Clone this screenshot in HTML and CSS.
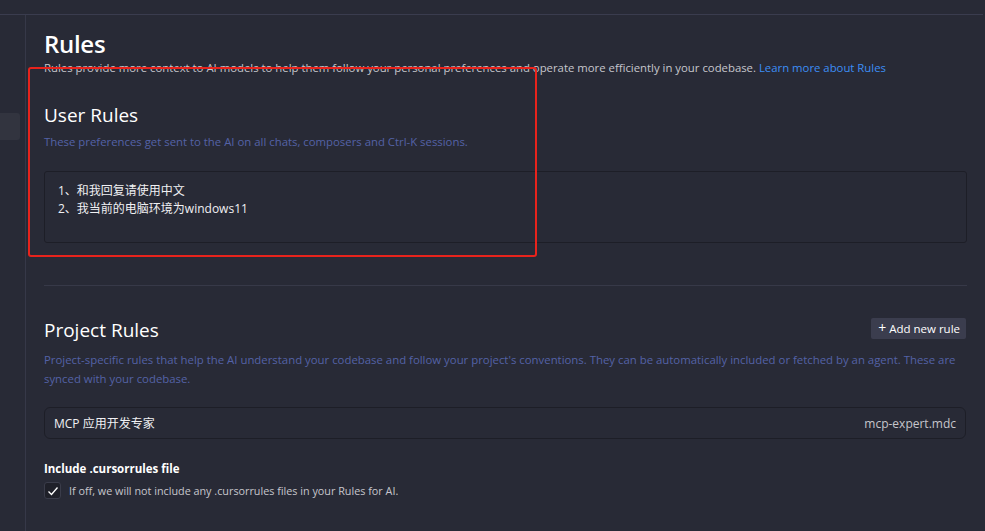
FILE: index.html
```html
<!DOCTYPE html>
<html lang="en">
<head>
    <meta charset="UTF-8">
    <title>Rules</title>
    <link rel="stylesheet" href="styles.css">
</head>
<body>
    <div class="topbar"></div>
    <div class="layout">
        <div class="sidebar">
            <div class="side-item"></div>
        </div>
        <div class="main">
            <h1 class="page-title">Rules</h1>
            <p class="page-desc">Rules provide more context to AI models to help them follow your personal preferences and operate more efficiently in your codebase. <a href="#" class="link">Learn more about Rules</a></p>

            <section class="section">
                <h2 class="section-title">User Rules</h2>
                <p class="section-desc">These preferences get sent to the AI on all chats, composers and Ctrl-K sessions.</p>
                <div class="rules-box">
                    <div>1、和我回复请使用中文</div>
                    <div>2、我当前的电脑环境为windows11</div>
                </div>
            </section>

            <hr class="divider">

            <section class="section">
                <div class="section-head">
                    <h2 class="section-title">Project Rules</h2>
                    <button class="btn-add"><span class="plus">+</span> Add new rule</button>
                </div>
                <p class="section-desc project-desc">Project-specific rules that help the AI understand your codebase and follow your project's conventions. They can be automatically included or fetched by an agent. These are synced with your codebase.</p>
                <div class="rule-row">
                    <span class="rule-name">MCP 应用开发专家</span>
                    <span class="rule-file">mcp-expert.mdc</span>
                </div>

                <div class="option-title">Include .cursorrules file</div>
                <label class="option">
                    <span class="checkbox">
                        <svg width="12" height="12" viewBox="0 0 12 12"><path d="M1.5 6.5 L4.5 9.5 L10.5 2.5" fill="none" stroke="#ffffff" stroke-width="1.3"/></svg>
                    </span>
                    <span class="option-text">If off, we will not include any .cursorrules files in your Rules for AI.</span>
                </label>
            </section>
        </div>
    </div>
    <div class="highlight"></div>
</body>
</html>
```

FILE: styles.css
```css
body {
    margin: 0;
    background: #282a36;
    font-family: "Open Sans", "Noto Sans CJK SC", sans-serif;
    color: #e6e6ea;
    overflow: hidden;
    height: 531px;
}

.topbar {
    height: 14px;
    border-bottom: 1px solid #3a3c4e;
    margin-right: 2px;
}

.layout {
    display: flex;
    height: 516px;
}

.sidebar {
    width: 25px;
    border-right: 1px solid #363848;
    flex-shrink: 0;
}

.side-item {
    margin-top: 98px;
    width: 20px;
    height: 27px;
    background: #32343f;
    border-radius: 0 3px 3px 0;
}

.main {
    flex: 1;
    padding: 14px 18px 0 18px;
}

.page-title {
    margin: 0;
    font-size: 24px;
    font-weight: 600;
    letter-spacing: -0.3px;
    color: #ffffff;
    line-height: 30px;
}

.page-desc {
    margin: 1px 0 0;
    font-size: 11.35px;
    line-height: 16px;
    color: #c6c6cc;
}

.link {
    color: #3d8ef5;
    text-decoration: none;
}

.section-title {
    margin: 0;
    font-size: 19px;
    font-weight: 400;
    color: #ffffff;
    line-height: 26px;
}

.section:first-of-type .section-title {
    margin-top: 26px;
}

.section-desc {
    margin: 4px 0 0;
    font-size: 11.37px;
    line-height: 19px;
    color: #5462a6;
}

.rules-box {
    margin-top: 20px;
    height: 72px;
    border: 1px solid #1d1e27;
    border-radius: 3px;
    padding: 10px 13px 0;
    box-sizing: border-box;
    font-size: 12px;
    line-height: 18px;
    color: #f0f0f3;
}

.divider {
    margin: 42px 0 0;
    border: none;
    border-top: 1px solid #373948;
}

.section-head {
    display: flex;
    justify-content: space-between;
    align-items: center;
    margin-top: 31px;
}

.btn-add {
    height: 21px;
    background: #3b3d4e;
    border: none;
    border-radius: 2px;
    color: #ffffff;
    font-family: inherit;
    font-size: 11.5px;
    padding: 0 6px 0 7px;
    margin: 0 1px 4px 0;
}

.plus {
    font-size: 14px;
    line-height: 14px;
}

.project-desc {
    margin-top: 7px;
    font-size: 11.39px;
}

.rule-row {
    margin-top: 19px;
    height: 32px;
    border: 1px solid #1d1e27;
    border-radius: 6px;
    display: flex;
    justify-content: space-between;
    align-items: center;
    padding: 0 9px;
    box-sizing: border-box;
    font-size: 12px;
    margin-right: 1px;
}

.rule-name {
    color: #f0f0f3;
}

.rule-file {
    color: #c6c6cc;
}

.option-title {
    margin-top: 22px;
    font-size: 11.5px;
    font-weight: 700;
    color: #ffffff;
}

.option {
    display: flex;
    align-items: center;
    gap: 8px;
    margin-top: 6px;
}

.checkbox {
    width: 15px;
    height: 15px;
    border: 1px solid #3a3c4a;
    background: #1f2029;
    border-radius: 3px;
    display: flex;
    align-items: center;
    justify-content: center;
}

.option-text {
    font-size: 10.8px;
    color: #c6c6cc;
}

.highlight {
    position: absolute;
    left: 28px;
    top: 67px;
    width: 505px;
    height: 186px;
    border: 2px solid #e8231c;
    border-radius: 3px;
}
```
